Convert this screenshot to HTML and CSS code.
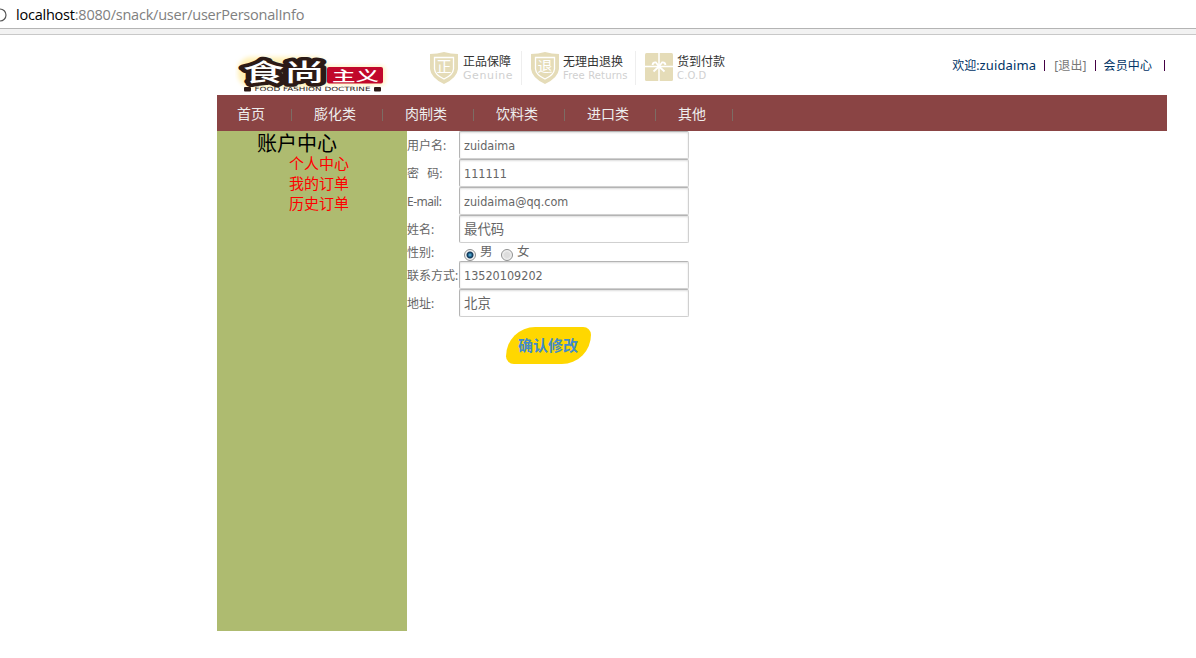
FILE: index.html
```html
<!DOCTYPE html>
<html lang="zh-CN">
<head>
    <meta charset="UTF-8">
    <title>个人中心</title>
    <link rel="stylesheet" href="styles.css">
</head>
<body>
    <!-- address bar -->
    <div class="address-bar">
        <svg class="info-icon" width="8" height="16" viewBox="0 0 8 16"><circle cx="0" cy="8" r="6" fill="none" stroke="#555" stroke-width="1.2"/></svg>
        <span class="host">localhost</span><span class="path">:8080/snack/user/userPersonalInfo</span>
    </div>
    <div class="toolbar-line"></div>

    <div class="wrapper">
        <div class="header">
            <svg class="logo" width="156" height="46" viewBox="0 0 156 46">
                <defs>
                    <filter id="glow" x="-10%" y="-20%" width="120%" height="140%"><feGaussianBlur stdDeviation="2"/></filter>
                </defs>
                <g class="logo-glow" filter="url(#glow)">
                    <rect x="3" y="8" width="90" height="30" rx="13"/>
                    <rect x="86" y="17" width="64" height="19" rx="4"/>
                </g>
                <text class="logo-main" x="8" y="31.500" textLength="82" lengthAdjust="spacingAndGlyphs">食尚</text>
                <rect x="92" y="18" width="56" height="16.500" rx="2" fill="#c1082b"/>
                <text class="logo-sub" x="97" y="31.500" textLength="47" lengthAdjust="spacingAndGlyphs">主义</text>
                <rect x="9" y="38" width="7" height="4.500" rx="1" fill="#2c1a16"/>
                <text class="logo-en" x="19.500" y="42.300" textLength="116" lengthAdjust="spacingAndGlyphs">FOOD FASHION DOCTRINE</text>
                <rect x="139" y="38" width="7" height="4.500" rx="1" fill="#2c1a16"/>
            </svg>

            <div class="promises">
                <div class="promise genuine">
                    <svg width="30" height="34" viewBox="0 0 30 34">
                        <path d="M1 3 Q8 3 15 1 Q22 3 29 3 V18 Q28 27 15 33 Q2 27 1 18 Z" fill="#e5dcb8"/>
                        <path d="M5.500 6.500 H24.500 V18 Q24 24 15 28 Q6 24 5.500 18 Z" fill="none" stroke="#fff" stroke-width="1.300"/>
                        <text class="shield-text" x="7.500" y="20.500">正</text>
                    </svg>
                    <div class="promise-text"><b>正品保障</b><i>Genuine</i></div>
                </div>
                <div class="promise returns">
                    <svg width="30" height="34" viewBox="0 0 30 34">
                        <path d="M1 3 Q8 3 15 1 Q22 3 29 3 V18 Q28 27 15 33 Q2 27 1 18 Z" fill="#e5dcb8"/>
                        <path d="M5.500 6.500 H24.500 V18 Q24 24 15 28 Q6 24 5.500 18 Z" fill="none" stroke="#fff" stroke-width="1.300"/>
                        <text class="shield-text" x="7.500" y="20.500">退</text>
                    </svg>
                    <div class="promise-text"><b>无理由退换</b><i>Free Returns</i></div>
                </div>
                <div class="promise cod">
                    <svg width="30" height="34" viewBox="0 0 30 34">
                        <rect x="1" y="2" width="28" height="28" rx="1.500" fill="#e5dcb8"/>
                        <path d="M1 15.500 H29 M15 2 V30" stroke="#fff" stroke-width="1.500"/>
                        <path d="M15 15.500 L12 11.500 Q9 11 8.500 14 M15 15.500 L18 11.500 Q21 11 21.500 14 M15 15.500 L9.500 20.500 M15 15.500 L20.500 20.500" fill="none" stroke="#fff" stroke-width="1.800"/>
                    </svg>
                    <div class="promise-text"><b>货到付款</b><i>C.O.D</i></div>
                </div>
            </div>

            <div class="user-links">
                <a class="welcome">欢迎:<span>zuidaima</span></a><em></em><a class="logout">[退出]</a><em></em><a class="member">会员中心</a><em></em>
            </div>
        </div>

        <ul class="nav">
            <li>首页</li>
            <li>膨化类</li>
            <li>肉制类</li>
            <li>饮料类</li>
            <li>进口类</li>
            <li>其他</li>
        </ul>

        <div class="main">
            <div class="sidebar">
                <h2>账户中心</h2>
                <ul>
                    <li>个人中心</li>
                    <li>我的订单</li>
                    <li>历史订单</li>
                </ul>
            </div>

            <form class="info-form">
                <div class="row"><label>用户名:</label><input type="text" value="zuidaima"></div>
                <div class="row"><label class="pwd">密&nbsp; 码:</label><input type="text" value="111111"></div>
                <div class="row"><label class="email">E-mail:</label><input type="text" value="zuidaima@qq.com"></div>
                <div class="row"><label>姓名:</label><input class="cn" type="text" value="最代码"></div>
                <div class="row sex-row">
                    <label>性别:</label>
                    <span class="radio checked"></span><span class="sex">男</span>
                    <span class="radio"></span><span class="sex">女</span>
                </div>
                <div class="row"><label>联系方式:</label><input type="text" value="13520109202"></div>
                <div class="row"><label>地址:</label><input class="cn" type="text" value="北京"></div>
                <button type="button" class="submit">确认修改</button>
            </form>
        </div>
    </div>
</body>
</html>
```

FILE: styles.css
```css
* {
    box-sizing: border-box;
}
body {
    margin: 0;
    background: #fff;
    color: #666;
    font-family: "Noto Sans", "Noto Sans CJK SC", sans-serif;
    font-size: 12px;
    overflow: hidden;
}
ul, h2 {
    margin: 0;
    padding: 0;
    list-style: none;
    font-weight: normal;
}

/* address bar */
.address-bar {
    display: flex;
    align-items: center;
    height: 28px;
    padding-top: 1px;
    font-family: "Open Sans", sans-serif;
    font-size: 14.5px;
    letter-spacing: -0.22px;
}
.info-icon {
    margin-right: 8px;
}
.host {
    color: #000;
}
.path {
    color: #808080;
}
.toolbar-line {
    height: 7px;
    background: #f2f2f2;
    border-top: 1px solid #b4b4b4;
    border-bottom: 1px solid #c8c8c8;
}

.wrapper {
    width: 950px;
    margin-left: 217px;
}

/* header */
.header {
    display: flex;
    height: 60px;
}
.logo {
    margin: 14px 0 0 18px;
    flex: none;
}
.logo-glow {
    fill: #fff0b8;
}
.logo-main {
    font-family: "Noto Sans CJK SC", sans-serif;
    font-size: 24px;
    font-weight: 500;
    fill: #fff;
    stroke: #2c1a16;
    stroke-width: 7px;
    stroke-linejoin: round;
    paint-order: stroke;
}
.logo-sub {
    font-family: "Noto Sans CJK SC", sans-serif;
    font-size: 14px;
    font-weight: 500;
    fill: #fff;
}
.logo-en {
    font-family: "DejaVu Sans", sans-serif;
    font-size: 5.8px;
    fill: #2c1a16;
}
.promises {
    display: flex;
    margin: 16px 0 0 38px;
    height: 34px;
}
.promise {
    display: flex;
    border-right: 1px solid #eee;
}
.promise svg {
    flex: none;
}
.genuine {
    width: 93px;
}
.returns {
    width: 114px;
    padding-left: 8px;
}
.cod {
    width: 110px;
    padding-left: 8px;
    border-right: none;
}
.shield-text {
    font-family: "Noto Sans CJK SC", sans-serif;
    font-size: 15px;
    fill: #fff;
}
.promise-text {
    margin-left: 3px;
    padding-top: 1px;
    white-space: nowrap;
}
.genuine .promise-text {
    margin-left: 4px;
}
.promise-text b {
    display: block;
    height: 17px;
    font-size: 12px;
    font-weight: normal;
    line-height: 19px;
    color: #333;
}
.promise-text i {
    display: block;
    font-family: "DejaVu Sans", sans-serif;
    font-size: 10px;
    font-style: normal;
    line-height: 14px;
    letter-spacing: 0.15px;
    color: #d0d0d0;
}
.genuine i {
    font-size: 11px;
    letter-spacing: 0.6px;
}
.user-links {
    display: flex;
    align-items: center;
    height: 20px;
    margin: 20px 1px 0 auto;
    color: #036;
}
.welcome {
    color: #036;
}
.welcome span {
    font-size: 13px;
    letter-spacing: 0.15px;
}
.user-links em {
    width: 1px;
    height: 11px;
    margin: 1px 8px 0;
    background: #404;
}
.user-links em:first-of-type {
    margin-right: 9px;
}
.user-links em:last-child {
    margin: 1px 1px 0 12px;
}
.logout {
    color: #777;
}
.logout, .member {
    letter-spacing: 0.1px;
}

/* navigation */
.nav {
    display: flex;
    height: 36px;
    background: #8a4444;
}
.nav li {
    display: flex;
    align-items: center;
    margin-right: 2px;
    padding-left: 20px;
    font-size: 14px;
    line-height: 37px;
    color: #eee;
}
.nav li::after {
    content: "";
    width: 1px;
    height: 12px;
    margin: 3px 0 0 26px;
    background: #7c6c64;
}

/* sidebar + form */
.main {
    display: flex;
}
.sidebar {
    width: 190px;
    height: 500px;
    background: #aebb70;
}
.sidebar h2 {
    height: 22px;
    padding-left: 40px;
    font-size: 20px;
    line-height: 25px;
    color: #000;
}
.sidebar li {
    height: 20px;
    padding-left: 72px;
    font-size: 15px;
    line-height: 21px;
    color: #f00;
}
.info-form {
    width: 282px;
}
.row {
    display: flex;
    align-items: center;
    height: 28px;
}
.row label {
    flex: none;
    width: 52px;
    padding-top: 2px;
    line-height: 26px;
    white-space: nowrap;
}
.row .pwd {
    word-spacing: 1px;
}
.row .email {
    letter-spacing: -0.5px;
}
.row input {
    width: 230px;
    height: 28px;
    padding: 1px 4px 0;
    border: 1px solid #d0d0d0;
    border-top-color: #b4b4b4;
    border-left-color: #b4b4b4;
    border-radius: 2px;
    box-shadow: inset 0 1px 2px #ddd;
    background: #fff;
    color: #666;
    font-family: "DejaVu Sans Condensed", "DejaVu Sans", sans-serif;
    font-size: 12.5px;
}
.row .cn {
    padding: 0 4px 2px;
    font-family: "Noto Sans CJK SC", sans-serif;
    font-size: 13.4px;
}
.sex-row {
    height: 18px;
}
.sex-row label {
    line-height: 16px;
}
.radio {
    width: 12px;
    height: 12px;
    margin: 6px 4px 0 5px;
    border: 1px solid #8e8f8f;
    border-radius: 50%;
    background: radial-gradient(#ddd 35%, #f4f4f4 70%);
}
.radio.checked {
    background: radial-gradient(circle at 50% 50%, #5cc5ef 0, #144064 2.5px, #163e60 3px, #f4f4f4 4px);
}
.sex {
    width: 16px;
    font-size: 12.5px;
    line-height: 18px;
}
.submit {
    display: block;
    width: 85px;
    height: 37px;
    margin: 10px 0 0 99px;
    padding: 0 1px 2px 0;
    border: none;
    border-radius: 30px 8px 30px 8px;
    background: #ffd700;
    color: #428bca;
    font-family: "Noto Sans CJK SC", sans-serif;
    font-size: 15px;
    font-weight: bold;
}
```
